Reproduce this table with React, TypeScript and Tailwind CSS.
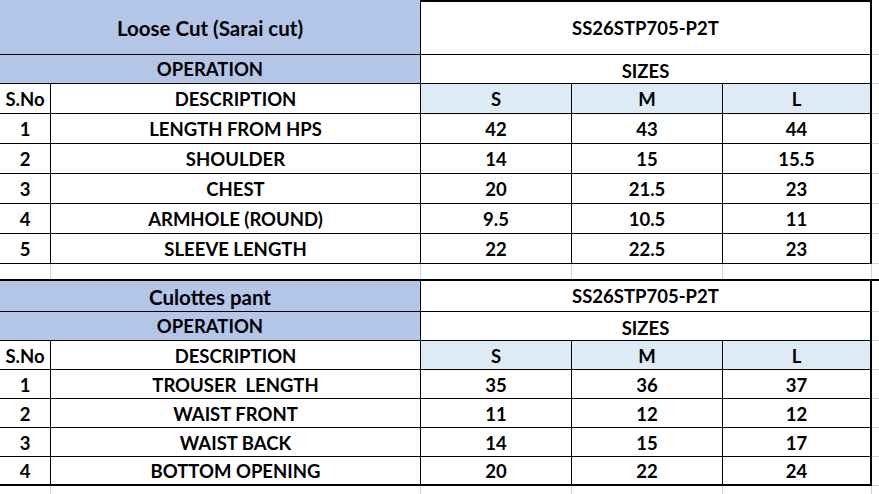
import React from "react";

type Table = {
  title: string;
  code: string;
  rows: [string, string, string, string, string][];
  titleH: string;
  opH: string;
  headH: string;
  rowH: string;
  first: boolean;
};

const tables: Table[] = [
  {
    title: "Loose Cut (Sarai cut)",
    code: "SS26STP705-P2T",
    rows: [
      ["1", "LENGTH FROM HPS", "42", "43", "44"],
      ["2", "SHOULDER", "14", "15", "15.5"],
      ["3", "CHEST", "20", "21.5", "23"],
      ["4", "ARMHOLE (ROUND)", "9.5", "10.5", "11"],
      ["5", "SLEEVE LENGTH", "22", "22.5", "23"],
    ],
    titleH: "h-[55px]",
    opH: "h-[29px]",
    headH: "h-[30px]",
    rowH: "h-[30px]",
    first: true,
  },
  {
    title: "Culottes pant",
    code: "SS26STP705-P2T",
    rows: [
      ["1", "TROUSER\u00a0 LENGTH", "35", "36", "37"],
      ["2", "WAIST FRONT", "11", "12", "12"],
      ["3", "WAIST BACK", "14", "15", "17"],
      ["4", "BOTTOM OPENING", "20", "22", "24"],
    ],
    titleH: "h-[31px]",
    opH: "h-[29px]",
    headH: "h-[29px]",
    rowH: "h-[29px]",
    first: false,
  },
];

const cell = "flex shrink-0 items-center justify-center border-b border-r border-black";
const gutter = "w-[7px] shrink-0 border-b border-[#d4d4d4]";

function SizeTable({ t }: { t: Table }) {
  return (
    <div className={t.first ? "" : "border-t-2 border-black"}>
      {/* Title */}
      <div className={`flex ${t.titleH}`}>
        <div className={`${cell} w-[421px] bg-[#b4c6e7] pt-[2px] text-[20.5px]`}>{t.title}</div>
        <div className={`${cell} w-[451px] border-r-2 ${t.first ? "border-t-2" : ""}`}>{t.code}</div>
        <div className={gutter} />
      </div>
      {/* Operation / sizes */}
      <div className={`flex ${t.opH}`}>
        <div className={`${cell} w-[421px] bg-[#b4c6e7]`}>OPERATION</div>
        <div className={`${cell} w-[451px] border-r-2 pt-[4px]`}>SIZES</div>
        <div className={gutter} />
      </div>
      {/* Column header */}
      <div className={`flex ${t.headH}`}>
        <div className={`${cell} w-[51px] pt-[2px]`}>S.No</div>
        <div className={`${cell} w-[370px] pt-[2px]`}>DESCRIPTION</div>
        <div className={`${cell} w-[151px] bg-[#ddebf7] pt-[2px]`}>S</div>
        <div className={`${cell} w-[151px] bg-[#ddebf7] pt-[2px]`}>M</div>
        <div className={`${cell} w-[149px] border-r-2 bg-[#ddebf7] pt-[2px]`}>L</div>
        <div className={gutter} />
      </div>
      {t.rows.map((r, i) => {
        const last = !t.first && i === t.rows.length - 1;
        const b = last ? "border-b-2" : "";
        return (
          <div key={r[0]} className={`flex ${t.rowH}`}>
            <div className={`${cell} ${b} w-[51px] pt-[2px]`}>{r[0]}</div>
            <div className={`${cell} ${b} w-[370px] pt-[2px]`}>{r[1]}</div>
            <div className={`${cell} ${b} w-[151px] pt-[2px]`}>{r[2]}</div>
            <div className={`${cell} ${b} w-[151px] pt-[2px]`}>{r[3]}</div>
            <div className={`${cell} ${b} w-[149px] border-r-2 pt-[2px]`}>{r[4]}</div>
            <div className={gutter} />
          </div>
        );
      })}
    </div>
  );
}

function GridGap({ h }: { h: string }) {
  return (
    <div className={`flex ${h}`}>
      <div className="w-[51px] shrink-0 border-r border-[#d4d4d4]" />
      <div className="w-[370px] shrink-0 border-r border-[#d4d4d4]" />
      <div className="w-[151px] shrink-0 border-r border-[#d4d4d4]" />
      <div className="w-[151px] shrink-0 border-r border-[#d4d4d4]" />
      <div className="w-[149px] shrink-0 border-r border-[#d4d4d4]" />
    </div>
  );
}

export default function App() {
  return (
    <div className="h-[494px] w-[879px] overflow-hidden bg-white font-['Lato',sans-serif] text-[18.5px] font-bold leading-none text-black">
      <SizeTable t={tables[0]} />
      <GridGap h="h-[15px]" />
      <SizeTable t={tables[1]} />
      <GridGap h="h-[12px]" />
    </div>
  );
}
